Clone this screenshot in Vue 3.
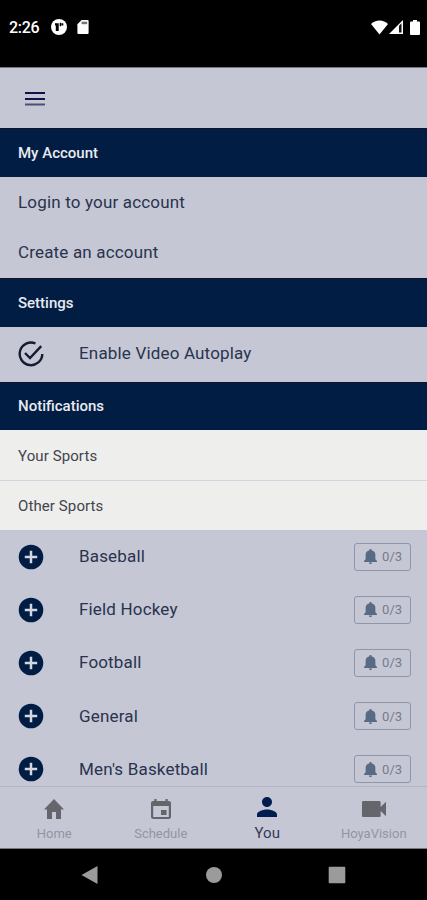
<script setup>
const sports = ['Baseball', 'Field Hockey', 'Football', 'General', "Men's Basketball"]

const tabs = [
  { label: 'Home', box: '2 3 20 17', icon: 'M10 20v-6h4v6h5v-8h3L12 3 2 12h3v8z' },
  {
    label: 'Schedule',
    box: '3 1 18 20',
    icon: 'M17 12h-5v5h5v-5zM16 1v2H8V1H6v2H5c-1.11 0-1.99.9-1.99 2L3 19c0 1.1.89 2 2 2h14c1.1 0 2-.9 2-2V5c0-1.1-.9-2-2-2h-1V1h-2zm3 18H5V8h14v11z',
  },
  {
    label: 'You',
    active: true,
    box: '4 4 16 16',
    icon: 'M12 12c2.21 0 4-1.79 4-4s-1.79-4-4-4-4 1.79-4 4 1.79 4 4 4zm0 2c-2.67 0-8 1.34-8 4v2h16v-2c0-2.66-5.33-4-8-4z',
  },
  {
    label: 'HoyaVision',
    box: '3 6 18 12',
    icon: 'M17 10.5V7c0-.55-.45-1-1-1H4c-.55 0-1 .45-1 1v10c0 .55.45 1 1 1h12c.55 0 1-.45 1-1v-3.500l4 4v-11l-4 4z',
  },
]
</script>

<template>
  <div class="phone">
    <div class="status">
      <span class="time">2:26</span>
      <svg class="app-mark" viewBox="0 0 16 16">
        <circle cx="8" cy="8" r="8" fill="#fff" />
        <path d="M4 4.200h3.700v7.800H4.800V6.500H4zM8.700 3.800h1.300v3.400H8.700zM10.300 4.300h2v2.200h-2z" fill="#000" />
      </svg>
      <svg class="sd" viewBox="0 0 12 15">
        <path d="M4.500 0H11q1 0 1 1v13q0 1-1 1H1q-1 0-1-1V4.500z" fill="#fff" />
        <path d="M4.500 1.800h6v2.700h-6z" fill="#777" />
      </svg>
      <span class="grow"></span>
      <svg class="wifi" viewBox="0 0 17 15">
        <path d="M8.500 14.500L0 4Q3.500 .5 8.500 .5T17 4z" fill="#fff" />
      </svg>
      <svg class="signal" viewBox="0 0 14 14">
        <path d="M0 14L14 0v14z" fill="#fff" />
        <path d="M10 5.800l2.500-2.500v9.200H10z" fill="#111" />
      </svg>
      <svg class="battery" viewBox="0 0 10 15">
        <path d="M3 0h4v1.500h2q1 0 1 1V14q0 1-1 1H1q-1 0-1-1V2.500q0-1 1-1h2z" fill="#fff" />
      </svg>
    </div>

    <header class="toolbar">
      <svg class="menu" viewBox="0 0 20 14">
        <path d="M0 0h20v2H0zM0 6h20v2H0z" fill="#11124a" />
        <path d="M0 11.500h20v2H0z" fill="#4c4e73" />
      </svg>
    </header>

    <main class="content">
      <h2 class="section account">My Account</h2>
      <div class="link login">Login to your account</div>
      <div class="link create">Create an account</div>
      <h2 class="section settings">Settings</h2>
      <div class="row autoplay">
        <svg class="row-icon" viewBox="0 0 26 26" fill="none" stroke="#141c34" stroke-width="2.400">
          <path d="M17.500 2.500A11.300 11.300 0 1 0 24.300 13" />
          <path d="M7 12l5 5L23.200 5.200" />
        </svg>
        <span class="row-label">Enable Video Autoplay</span>
      </div>
      <h2 class="section notifications">Notifications</h2>
      <div class="subhead your">Your Sports</div>
      <div class="subhead other">Other Sports</div>
      <div v-for="sport in sports" :key="sport" class="row sport">
        <svg class="row-icon" viewBox="0 0 26 26">
          <circle cx="13" cy="13" r="12.300" fill="#011d44" />
          <path d="M13 6.800v12.400M6.800 13h12.400" stroke="#d4d6e2" stroke-width="2.500" />
        </svg>
        <span class="row-label">{{ sport }}</span>
        <span class="badge">
          <svg class="bell" viewBox="0 0 12 15" preserveAspectRatio="none">
            <path d="M6 0q1.200 0 1.200 1.400Q10.500 2.300 10.500 5.800v4.500l1.500 1.700v1H0v-1l1.500-1.700V5.800q0-3.500 3.300-4.400Q4.800 0 6 0zM4.500 13.500h3Q7.500 15 6 15t-1.500-1.500z" fill="#596b84" />
          </svg>
          <span>0/3</span>
        </span>
      </div>
    </main>

    <nav class="tabs">
      <div v-for="tab in tabs" :key="tab.label" class="tab" :class="[tab.label.toLowerCase(), { active: tab.active }]">
        <svg class="tab-icon" :viewBox="tab.box" preserveAspectRatio="none"><path :d="tab.icon" fill="currentColor" /></svg>
        <span class="tab-label">{{ tab.label }}</span>
      </div>
    </nav>

    <footer class="system">
      <svg viewBox="0 0 18 18"><path d="M.5 9L16.500 0v18z" fill="#9b9b9b" /></svg>
      <svg viewBox="0 0 18 18"><circle cx="9" cy="9" r="8" fill="#9b9b9b" /></svg>
      <svg viewBox="0 0 18 18"><rect x=".7" y=".7" width="16.600" height="16.600" rx="1" fill="#9b9b9b" /></svg>
    </footer>
  </div>
</template>

<style>
body {
  margin: 0;
  background: #000;
}
</style>

<style scoped>
.phone {
  display: flex;
  flex-direction: column;
  width: 427px;
  height: 900px;
  overflow: hidden;
  background: #c5c7d5;
  color: #29334e;
  font-family: Roboto, sans-serif;
}
svg {
  display: block;
  flex: none;
}
.status {
  display: flex;
  flex: none;
  align-items: center;
  box-sizing: border-box;
  height: 68px;
  padding: 0 7px 13px 9px;
  background: #000;
  border-bottom: 1px solid #777782;
}
.time {
  width: 42px;
  padding-top: 2px;
  color: #fff;
  font-size: 16px;
  font-weight: 500;
  line-height: 20px;
  letter-spacing: -0.3px;
}
.app-mark {
  width: 16px;
  height: 16px;
}
.sd {
  width: 12px;
  height: 14px;
  margin-left: 10px;
}
.grow {
  flex: 1;
}
.wifi {
  width: 17px;
  height: 15px;
}
.signal {
  width: 14px;
  height: 14px;
  margin-left: 1px;
}
.battery {
  width: 10px;
  height: 15px;
  margin-left: 7px;
}
.toolbar {
  display: flex;
  flex: none;
  align-items: center;
  box-sizing: border-box;
  height: 60px;
  padding: 1px 25px 0;
}
.menu {
  width: 20px;
  height: 14px;
}
.content {
  flex: none;
  height: 658px;
  overflow: hidden;
}
.section {
  box-sizing: border-box;
  height: 49px;
  margin: 0;
  padding: 0 18px;
  background: #011d43;
  border-top: 1px solid #11112e;
  color: #e9eaf0;
  font-size: 15px;
  font-weight: 500;
  line-height: 48px;
}
.account {
  line-height: 49px;
}
.link {
  box-sizing: border-box;
  height: 50px;
  padding: 0 18px;
  font-size: 17px;
  line-height: 50px;
  letter-spacing: 0.17px;
}
.create {
  height: 51px;
}
.row {
  display: flex;
  align-items: center;
  box-sizing: border-box;
  padding: 0 16px 0 18px;
}
.row-icon {
  width: 26px;
  height: 26px;
}
.row-label {
  flex: 1;
  margin-left: 35px;
  padding-bottom: 1px;
  font-size: 17px;
  line-height: 24px;
  letter-spacing: 0.17px;
}
.autoplay {
  height: 55px;
  padding-bottom: 2px;
}
.notifications {
  height: 48px;
  line-height: 46px;
}
.subhead {
  box-sizing: border-box;
  height: 50px;
  padding: 0 18px;
  background: #eeeeec;
  color: #42444c;
  font-size: 15px;
  line-height: 52px;
  letter-spacing: 0.1px;
}
.your {
  height: 51px;
  border-bottom: 1px solid #d3d4df;
}
.other {
  height: 49px;
  line-height: 50px;
}
.sport {
  height: 53.2px;
}
.badge {
  display: flex;
  align-items: center;
  box-sizing: border-box;
  width: 57px;
  height: 28px;
  padding-left: 9px;
  border: 1.500px solid #8f95aa;
  border-radius: 3px;
  color: #747b8f;
  font-size: 13px;
  letter-spacing: 0.1px;
}
.bell {
  width: 13px;
  height: 15px;
  margin-right: 5px;
}
.tabs {
  display: grid;
  flex: none;
  grid-template-columns: repeat(4, 1fr);
  box-sizing: border-box;
  height: 63px;
  padding-left: 1px;
  border-top: 1px solid #b3b5c6;
  border-bottom: 1px solid #777780;
}
.tab {
  display: flex;
  flex-direction: column;
  align-items: center;
  padding-top: 12px;
  color: #64666c;
}
.tab-icon {
  width: 20px;
  height: 20px;
}
.hoyavision .tab-icon {
  width: 24px;
  height: 16px;
  margin: 2px 0;
}
.tab-label {
  margin-top: 7px;
  color: #9395a2;
  font-size: 13px;
  line-height: 16px;
}
.active {
  padding-top: 10px;
  color: #011d50;
}
.active .tab-label {
  margin-top: 8px;
  color: #343a56;
  font-size: 15px;
}
.system {
  display: flex;
  flex: 1;
  align-items: center;
  justify-content: space-between;
  padding: 0 81px;
  background: #000;
}
.system svg {
  width: 18px;
  height: 18px;
}
</style>
